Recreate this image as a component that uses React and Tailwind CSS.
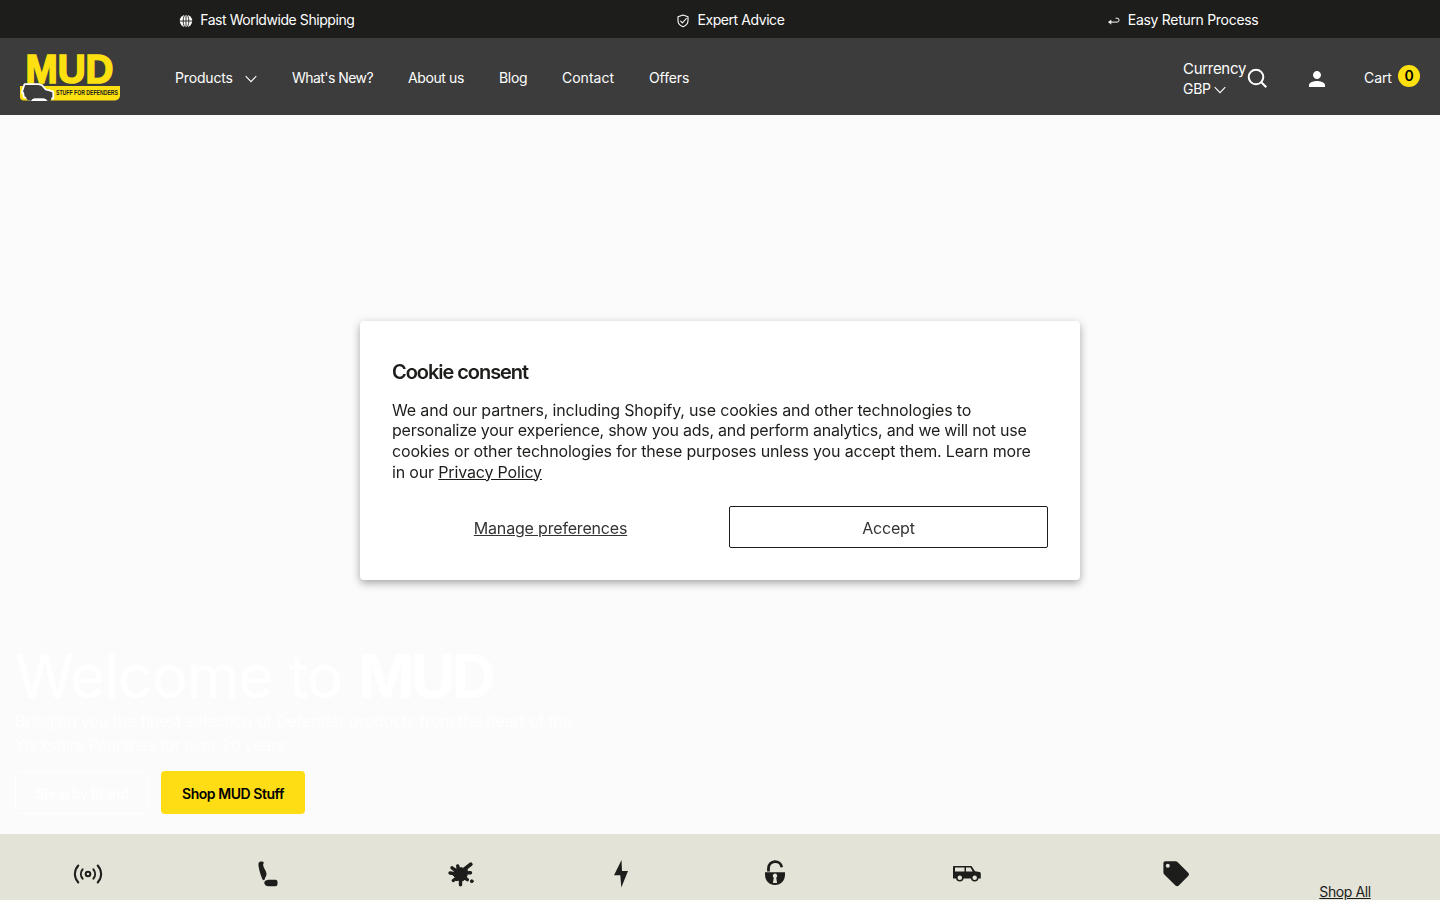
import React from 'react';

const announcements = [
  { text: 'Fast Worldwide Shipping', icon: GlobeIcon, width: 'w-[175px] tracking-[-0.43px]' },
  { text: 'Expert Advice', icon: ShieldIcon, width: 'w-[108px] tracking-[-0.43px]' },
  { text: 'Easy Return Process', icon: ReturnIcon, width: 'w-[152px]' },
];

const navLinks = [
  { name: "What's New?", width: 'w-[81px] tracking-[-0.55px]' },
  { name: 'About us', width: 'w-[56px] tracking-[-0.4px]' },
  { name: 'Blog', width: 'w-[28px]' },
  { name: 'Contact', width: 'w-[52px] tracking-[0px]' },
  { name: 'Offers', width: 'w-[41px] tracking-[-0.1px]' },
];

const categories = [
  { id: 'sound', icon: SoundIcon, width: 'w-[176px]' },
  { id: 'seats', icon: SeatIcon, width: 'w-[181px]' },
  { id: 'mud', icon: SplatIcon, width: 'w-[208px]' },
  { id: 'electrical', icon: BoltIcon, width: 'w-[111px]' },
  { id: 'security', icon: LockIcon, width: 'w-[198px]' },
  { id: 'exterior', icon: CarIcon, width: 'w-[186px]' },
  { id: 'offers', icon: TagIcon, width: 'w-[232px]' },
];

function GlobeIcon() {
  return (
    <svg width="14" height="14" viewBox="0 0 14 14">
      <circle cx="7" cy="7" r="6.200" fill="#fff" />
      <g fill="none" stroke="#1d1d1b" strokeWidth=".9">
        <ellipse cx="7" cy="7" rx="2.800" ry="6.600" />
        <path d="M7 .5v13M.5 7h13" />
      </g>
    </svg>
  );
}

function ShieldIcon() {
  return (
    <svg width="14" height="14" viewBox="0 0 14 14" fill="none" stroke="#fff" strokeWidth="1.1" strokeLinejoin="round" strokeLinecap="round">
      <path d="M7 1 12 2.700v4.100c0 2.800-2.300 4.900-5 6-2.700-1.100-5-3.200-5-6V2.700z" />
      <path d="m4.700 7.200 1.700 1.700 4-4.400" />
    </svg>
  );
}

function ReturnIcon() {
  return (
    <svg width="14" height="14" viewBox="0 0 14 14" fill="none" stroke="#fff" strokeWidth="1" strokeLinejoin="round" strokeLinecap="round">
      <path d="M9 4.200h1.100a1.900 1.900 0 0 1 0 3.900H2" />
      <path d="M3.800 6.200 1.600 8.100l2.200 1.900z" fill="#fff" strokeWidth=".5" />
    </svg>
  );
}

function ChevronIcon() {
  return (
    <svg width="12" height="8" viewBox="0 0 12 8" fill="none" stroke="#fff" strokeWidth="1.1">
      <path d="m.7 1.200 5.300 5.400 5.300-5.400" />
    </svg>
  );
}

function Logo() {
  return (
    <svg width="100" height="48" viewBox="0 0 100 48" overflow="visible" className="font-['Liberation_Sans',sans-serif] font-bold tracking-normal">
      <path d="M0 33h100v9.500a5 5 0 0 1-5 5H4a4 4 0 0 1-4-4z" fill="#fde010" />
      <text x="5.500" y="29.700" fontSize="40" textLength="88" lengthAdjust="spacingAndGlyphs" fill="#fde010" stroke="#fde010" strokeWidth="1.600">MUD</text>
      {/* 4x4 silhouette */}
      <path d="M4.500 31.200h14l3.500 1 3.700 4.300 6.300 1.700c1 .3 1.300 1 1.300 2v5.300h-2.800l-2.500 1.500H9.500l-2.700-2-3-.8-.6-4.200H2l.5-3z" fill="#3c3c3c" stroke="#fff" strokeWidth="1.800" strokeLinejoin="round" />
      <path d="M13.500 45.300h11v2.200h-11z" fill="#fff" />
      <path d="M6 43.500h6.500v2.200a2.300 2.300 0 0 1-2.500 2 4 4 0 0 1-4-4.200zM25.500 43.500h5.800v1.500a2.700 2.700 0 0 1-5.300 1z" fill="#3c3c3c" />
      <text x="36" y="42.300" fontSize="6.600" textLength="62" lengthAdjust="spacingAndGlyphs" fill="#1d1d1b">STUFF FOR DEFENDERS</text>
    </svg>
  );
}

function SoundIcon() {
  return (
    <svg width="30" height="30" viewBox="0 0 30 30" fill="none" stroke="#1d1d1b" strokeWidth="2" strokeLinecap="round">
      <circle cx="15" cy="15" r="2.300" />
      <path d="M9.600 10.300a7.400 7.400 0 0 0 0 9.400M20.400 10.300a7.400 7.400 0 0 1 0 9.400M5.300 6.500c-4.600 5.200-4.600 11.800 0 17M24.700 6.500c4.600 5.200 4.600 11.800 0 17" />
    </svg>
  );
}

function SeatIcon() {
  return (
    <svg width="30" height="30" viewBox="0 0 30 30" fill="#1d1d1b">
      <path d="M7.500 3c1.400-.8 3.700-.6 4.200.4.300.8-.8 1.500-.5 3 .4 2.600 3 5.200 3.300 8 .2 2.500-1.300 3.600-1.800 5.800-.3 1.200-1.500 1.200-2.100.2C9 17.300 7.100 11 6.500 6.700c-.2-1.900 0-3.200 1-3.700z" />
      <path d="M13.700 21.600c1.800-1.200 3-.9 5.300-.9h4.300c1.500 0 2.200.8 2.200 2v2c0 1.700-.8 2.500-2.400 2.500h-6.500c-2.400 0-3.700-1-4.200-2.600-.3-1.200.1-2.200 1.300-3z" />
    </svg>
  );
}

function SplatIcon() {
  return (
    <svg width="30" height="30" viewBox="0 0 30 30" fill="#1d1d1b" stroke="#1d1d1b" strokeLinecap="round">
      <path d="M9 10.500 12.500 9.500l3-1 2.500 1.700 3.500.5-1.200 3.300.8 2.500-1.500 3.300-2.800 2-3.300-.8-3.500.7-.7-3.500-2.300-2 1.500-2.500z" strokeWidth="1" />
      <path d="m13 12-1.300-5M12 13 6 8.800M12 15l-8-1M12 18l-4.700 3.500M14.500 18v7.700M16 17l5.300 3.700M17 14l7.500-.3" strokeWidth="3.400" />
      <path d="m16 12 8.800-6.700" strokeWidth="3.800" />
      <circle cx="25.800" cy="22.200" r="1.500" strokeWidth=".8" />
    </svg>
  );
}

function BoltIcon() {
  return (
    <svg width="30" height="30" viewBox="0 0 30 30" fill="#1d1d1b">
      <path d="M15.500 1 8 16.300h6.300L15.300 28.500 22 12h-6z" />
    </svg>
  );
}

function LockIcon() {
  return (
    <svg width="30" height="30" viewBox="0 0 30 30" fill="none">
      <path d="M8.500 12.500V9a6.700 6.700 0 0 1 13.300-.8" stroke="#1d1d1b" strokeWidth="2.800" />
      <path d="M5 13.300h20v2.200c0 6-4 10.500-10 10.500S5 21.500 5 15.500z" fill="#1d1d1b" />
      <path d="M15 14.500a2.300 2.300 0 0 0-1.200 4.200l-.9 5.300h4.200l-.9-5.300a2.300 2.300 0 0 0-1.200-4.200z" fill="#e4e3d7" />
    </svg>
  );
}

function CarIcon() {
  return (
    <svg width="30" height="30" viewBox="0 0 30 30" fill="#1d1d1b">
      <path fillRule="evenodd" d="M2 7h17.500l3.500 5.300 4.500.8c1 .2 1.300.8 1.300 1.800v4.600H1V8.300C1 7.500 1.300 7 2 7zM3 8.600v3.900h9.500V8.600zM14 8.600v3.900h6.700l-2.200-3.900z" />
      <g fill="#e4e3d7" stroke="#1d1d1b" strokeWidth="1.500">
        <circle cx="7.800" cy="18.800" r="3" />
        <circle cx="22.700" cy="18.800" r="3" />
      </g>
    </svg>
  );
}

function TagIcon() {
  return (
    <svg width="30" height="30" viewBox="0 0 30 30" fill="#1d1d1b">
      <path fillRule="evenodd" d="M4.500 2.300h10c.8 0 1.400.2 2 .8L27.200 13.800c1 1 1 2.200 0 3.200l-9.400 9.400c-1 1-2.300 1-3.300 0L3.300 15.600c-.6-.6-.9-1.200-.9-2V4.400c0-1.300.8-2.100 2.100-2.100zM6.800 4.700a2 2 0 1 0 0 4 2 2 0 0 0 0-4z" />
    </svg>
  );
}

function AnnouncementBar() {
  return (
    <div className="h-[38px] shrink-0 bg-[#1d1d1b] pl-[18px] pr-5 flex items-center justify-around">
      {announcements.map(({ text, icon: Icon, width }) => (
        <div key={text} className={`${width} flex items-center gap-[7px] pt-0.5 whitespace-nowrap`}>
          <span className="shrink-0 pt-0.5"><Icon /></span>
          <span>{text}</span>
        </div>
      ))}
    </div>
  );
}

function Header() {
  return (
    <header className="h-[77px] shrink-0 bg-[#3c3c3c] px-5 flex items-center">
      <a href="#" className="w-[155px] shrink-0"><Logo /></a>

      <nav className="flex items-center gap-[35px] pt-0.5 whitespace-nowrap">
        <a href="#" className="w-[82px] flex items-center justify-between tracking-[-0.15px]">
          Products
          <span className="pt-0.5"><ChevronIcon /></span>
        </a>
        {navLinks.map(link => (
          <a key={link.name} href="#" className={link.width}>{link.name}</a>
        ))}
      </nav>

      <div className="ml-auto flex items-center whitespace-nowrap">
        <div className="w-[63px] leading-5 pt-1">
          <div className="text-[15px]">Currency</div>
          <div className="flex items-center gap-[3px]">
            GBP
            <span className="pt-0.5"><ChevronIcon /></span>
          </div>
        </div>
        <button className="w-[61px] pt-0.5">
          <svg width="22" height="22" viewBox="0 0 22 22" fill="none" stroke="#fff" strokeWidth="2">
            <circle cx="10" cy="10" r="7.300" />
            <path d="m15.300 15.300 5 5" />
          </svg>
        </button>
        <button className="w-[57px] pt-1">
          <svg width="20" height="20" viewBox="2 2 20 20" fill="#fff">
            <path d="M12 12c2.210 0 4-1.790 4-4s-1.790-4-4-4-4 1.790-4 4 1.790 4 4 4zm0 2c-2.670 0-8 1.340-8 4v2h16v-2c0-2.660-5.330-4-8-4z" />
          </svg>
        </button>
        <a href="#" className="flex items-center pt-0.5">
          <span className="w-[34px] tracking-[-0.1px]">Cart</span>
          <span className="w-[22px] h-[22px] mb-1 rounded-full bg-[#fde010] text-black font-semibold flex items-center justify-center">0</span>
        </a>
      </div>
    </header>
  );
}

function Hero() {
  return (
    <section className="h-[719px] shrink-0 bg-[#fbfbfb] text-white px-[15px] pb-5 flex flex-col justify-end">
      <h1 className="text-[60px] leading-[66px] tracking-[-0.8px] whitespace-nowrap">
        Welcome to <b className="font-bold tracking-[-3px]">MUD</b>
      </h1>
      <p className="text-base leading-6 tracking-[-0.18px] whitespace-nowrap">
        Bringing you the finest selection of Defender products from the heart of the<br />
        <span className="tracking-[-0.25px]">Yorkshire Pennines for over 20 years.</span>
      </p>
      <div className="mt-[14px] flex gap-3 font-semibold tracking-[-0.45px] whitespace-nowrap">
        <a href="#" className="w-[134px] h-[43px] pt-0.5 rounded border border-white flex items-center justify-center">Shop by Brand</a>
        <a href="#" className="w-[144px] h-[43px] pt-0.5 rounded bg-[#fedd15] text-black flex items-center justify-center">Shop MUD Stuff</a>
      </div>
    </section>
  );
}

function CategoryStrip() {
  return (
    <section className="h-[66px] shrink-0 bg-[#e4e3d7] flex">
      {categories.map(({ id, icon: Icon, width }) => (
        <a key={id} href="#" className={`${width} shrink-0 flex justify-center pt-[25px]`}>
          <Icon />
        </a>
      ))}
      <a href="#" className="w-[106px] pt-12 text-center text-[#1d1d1b] tracking-[-0.4px] underline whitespace-nowrap">Shop All</a>
    </section>
  );
}

function CookieBanner() {
  return (
    <div className="fixed inset-0 flex items-center justify-center pointer-events-none">
      <div className="w-[720px] h-[259px] rounded-sm bg-white px-8 pt-[41px] text-base text-[#1d1d1b] shadow-[0_3px_8px_rgba(0,0,0,0.35)] pointer-events-auto">
        <h2 className="text-[20px] leading-5 font-semibold tracking-[-1.05px]">Cookie consent</h2>
        <p className="mt-[18px] leading-[20.700px] tracking-[-0.16px] whitespace-nowrap">
          We and our partners, including Shopify, use cookies and other technologies to<br />
          <span className="tracking-[-0.25px]">personalize your experience, show you ads, and perform analytics, and we will not use</span><br />
          cookies or other technologies for these purposes unless you accept them. Learn more<br />
          in our <a href="#" className="underline">Privacy Policy</a>
        </p>
        <div className="mt-6 flex gap-5 tracking-[-0.18px] text-[#333]">
          <button className="w-[317px] h-[42px] pt-0.5 underline">Manage preferences</button>
          <button className="w-[319px] h-[42px] pt-0.5 rounded-xs border border-[#1d1d1b]">Accept</button>
        </div>
      </div>
    </div>
  );
}

export default function App() {
  return (
    <div className="h-[900px] overflow-hidden flex flex-col font-[Inter,sans-serif] text-sm leading-5 tracking-[-0.3px] text-white">
      <AnnouncementBar />
      <Header />
      <Hero />
      <CategoryStrip />
      <CookieBanner />
    </div>
  );
}
